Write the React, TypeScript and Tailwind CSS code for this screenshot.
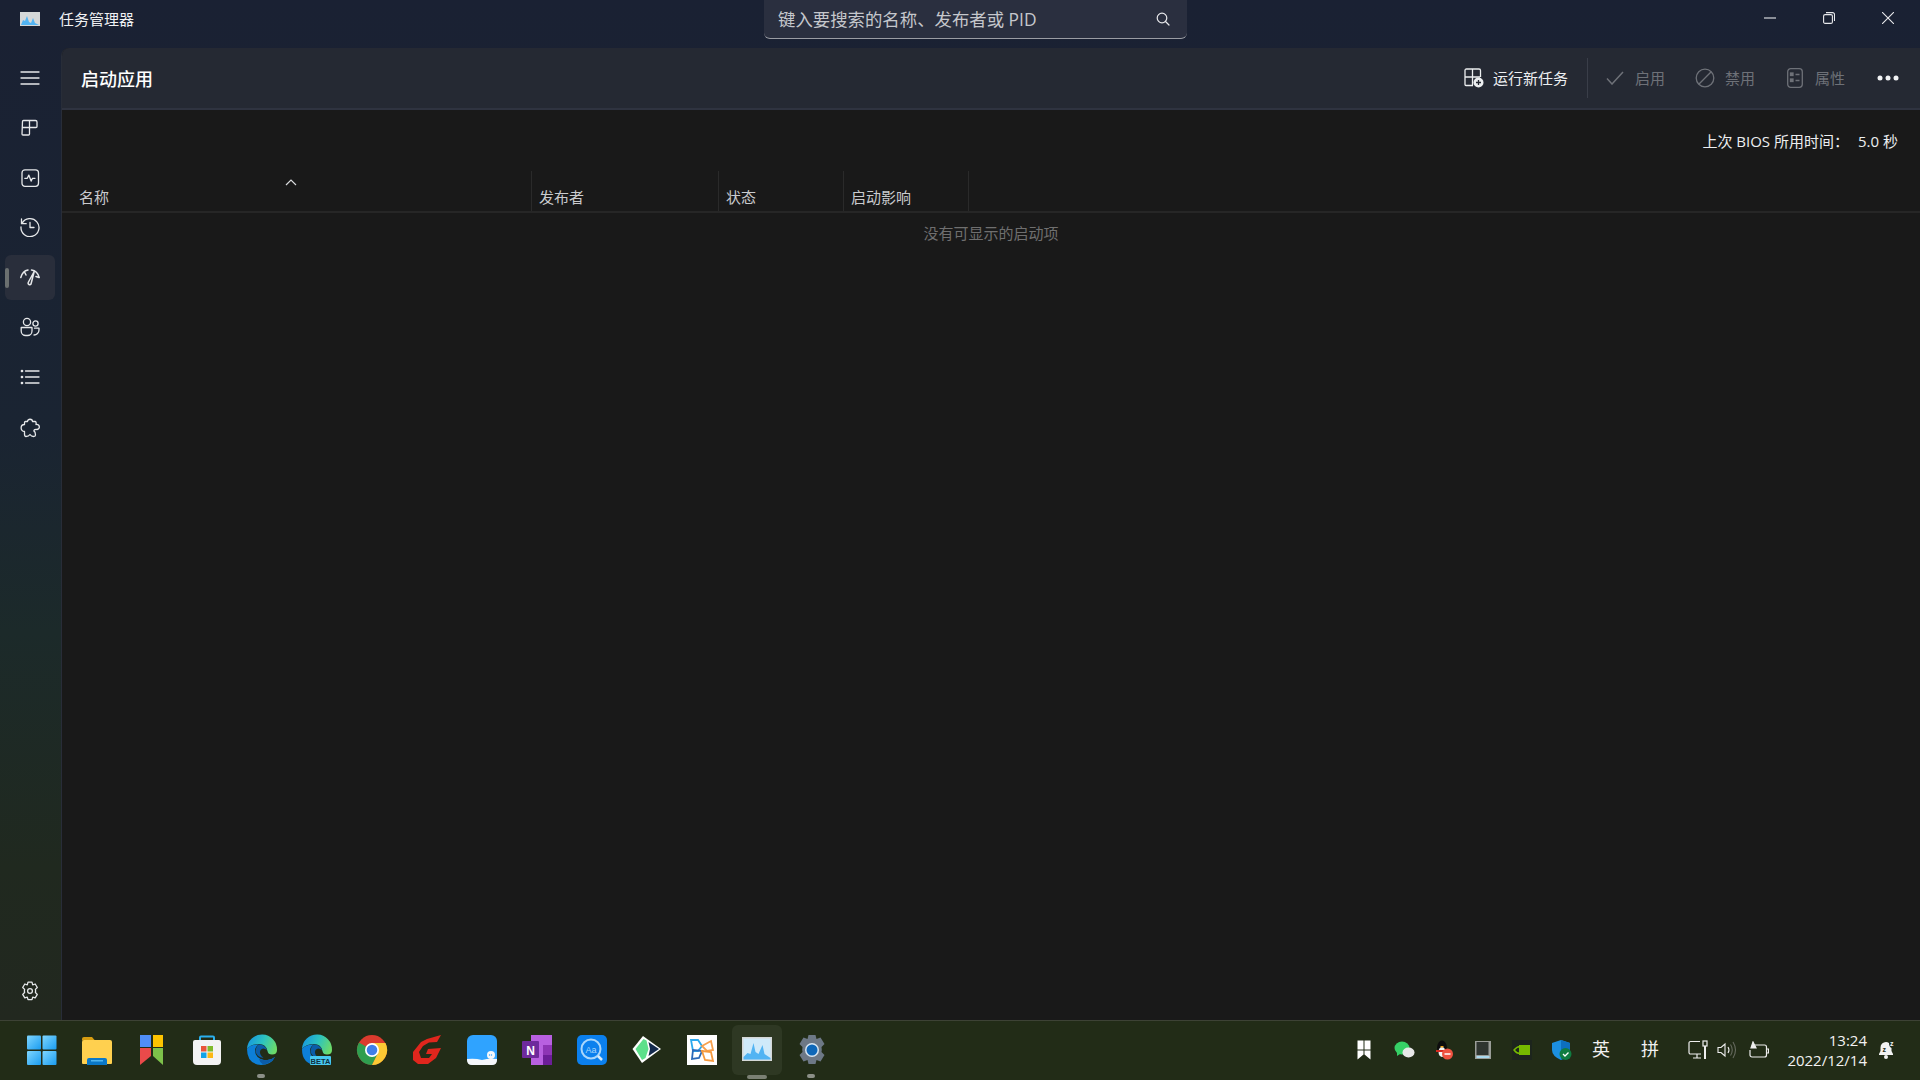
import React from "react";

const S = ({ children, size = 20, className = "" }: { children: React.ReactNode; size?: number; className?: string }) => (
  <svg width={size} height={size} viewBox="0 0 20 20" fill="none" stroke="currentColor" strokeWidth={1.3} strokeLinecap="round" strokeLinejoin="round" className={className}>
    {children}
  </svg>
);

const sideIcons: React.ReactNode[] = [
  <S key="m"><path d="M1 4h18M1 10h18M1 16h18" /></S>,
  <S key="p"><path d="M2.500 3.500a1 1 0 0 1 1-1h12a1.500 1.500 0 0 1 1.500 1.500v4.500a1 1 0 0 1-1 1h-6.500v6.500a1 1 0 0 1-1 1h-5.500a1 1 0 0 1-1-1zM2.500 9.500h7M9.500 2.500v7" /></S>,
  <S key="q"><rect x="2" y="1.800" width="16.500" height="16.500" rx="3" /><path d="M4.800 10.300h2.500l1.500-3.200 2.300 6 1.400-2.800h2.500" /></S>,
  <S key="h" className="-mt-[2px]"><path d="M2 6.500A9 9 0 1 1 1 10M1.500 2v4.700h4.700" /><path d="M10 5.500v5h4" /></S>,
  <S key="s" className="-mt-[2px]"><g strokeWidth={1.500}><path d="M.8 10.500C2 6 5 3.500 8 3M4.500 5 6 8M11.500 3c3.500.5 6.500 3 7.700 7.500M19 10.500l-3-1" /><path d="M14.200 4.500 8.200 15.500a1.600 1.600 0 0 0 2.800 1.500z" /></g></S>,
  <S key="u" className="-mt-[2px]"><circle cx="7" cy="5" r="3.600" /><circle cx="15.500" cy="6.500" r="2.600" /><path d="M1.200 10.500h10.800v3.500a4.500 4.500 0 0 1-4.500 4.500h-1.800a4.500 4.500 0 0 1-4.500-4.500zM14.500 11.200h4.500v1.800a5 5 0 0 1-5 5" /></S>,
  <S key="l" className="-mt-[2px]"><path d="M5.500 4h13.500M5.500 10h13.500M5.500 16h13.500" /><circle cx="2" cy="4" r=".7" fill="currentColor" /><circle cx="2" cy="10" r=".7" fill="currentColor" /><circle cx="2" cy="16" r=".7" fill="currentColor" /></S>,
  <S key="g"><path d="M7.500 3.500C7.500.5 12.500.5 12.500 3.500L15 3.500Q16.500 3.500 16 6.500C20 6 20.500 11 17 11.500C14 11 13 13 15 14L15.500 17Q15.500 18.500 13.500 18.500C12 18.500 11 18 10 16.500C9 18 8 18.500 6 18.500Q4.500 18.500 4.500 16L4.500 13.500C0 13.500 0 6.500 4.500 6.500L4.500 4.500Q4.500 3.500 5.500 3.500z" /></S>,
];

const Settings = () => (
  <S><path d="M8 1.200h4l.7 2.600 2.500-.8 2.100 3.500-1.900 1.900c.2.700.2 2.400 0 3.100l1.900 1.900-2.100 3.500-2.500-.8-.7 2.600H8l-.7-2.600-2.500.8-2.100-3.500 1.900-1.900c-.2-.7-.2-2.400 0-3.100L2.700 6.500 4.800 3l2.500.8z" /><circle cx="10" cy="10" r="2.400" /></S>
);

const I30 = ({ children }: { children: React.ReactNode }) => (
  <svg width={32} height={32} viewBox="0 0 32 32">{children}</svg>
);

const Edge = ({ id }: { id: string }) => (
  <>
    <defs>
      <linearGradient id={id} x1="0" y1="0.300" x2="1" y2="0.600">
        <stop offset="0" stopColor="#1796df" />
        <stop offset="0.500" stopColor="#2cc3c0" />
        <stop offset="1" stopColor="#6ddb68" />
      </linearGradient>
    </defs>
    <path d="M1 15A15 15 0 0 1 31 16Q31 20.500 26 20.500Q22 20.500 21.500 17Q20 10 13 10Q5 10 1 15z" fill={`url(#${id})`} />
    <path d="M1 15Q5 10 13 10.500Q9.500 12 9 16Q9 24 18 26Q24 27 29 23Q25 31 15 31Q1 30 1 15z" fill="#0d7fd8" />
    <path d="M13 10.500Q19 10.500 21 16Q17 13 14.500 16Q12.500 20 17.500 24Q10.500 23 9.500 17Q10 12 13 10.500z" fill="#0b5ca8" />
    <path d="M18 26Q24 27 29 23Q25 30 17 30.500Q14 29 13 25Q15 25.500 18 26z" fill="#0b5ca8" />
  </>
);

const apps: React.ReactNode[] = [
  <I30 key="win"><defs><linearGradient id="w" x1="0" y1="0" x2="1" y2="1"><stop offset="0" stopColor="#7fd6ff" /><stop offset="1" stopColor="#1a9cf0" /></linearGradient></defs><rect x="1" y="1.500" width="14" height="14" rx="1" fill="url(#w)" /><rect x="16.500" y="1.500" width="14" height="14" rx="1" fill="url(#w)" /><rect x="1" y="17" width="14" height="14" rx="1" fill="url(#w)" /><rect x="16.500" y="17" width="14" height="14" rx="1" fill="url(#w)" /></I30>,
  <I30 key="f"><path d="M1 5a2 2 0 0 1 2-2h8l3 3.500H1z" fill="#d69d11" /><path d="M1 8q0-2 2-2h26q2 0 2 2v21q0 1-1 1H2q-1 0-1-1z" fill="#ffd04f" /><path d="M6 31v-5q0-2 2-2h16q2 0 2 2v5z" fill="#0a78c8" /><rect x="10" y="26" width="12" height="1.500" fill="#4fb5ef" /></I30>,
  <I30 key="b"><rect x="4" y="1" width="11" height="12" fill="#4f8ef7" /><rect x="17" y="1" width="10" height="12" fill="#fdc400" /><path d="M4 14h11v8L4 31z" fill="#ea4a4a" /><path d="M17 14h10v17l-10-9z" fill="#7dc14a" /></I30>,
  <I30 key="st"><path d="M9 7V3.500q0-1 1-1h12q1 0 1 1V7" fill="none" stroke="#2ab0ee" strokeWidth="2" /><path d="M2 8q0-2 2-2h24q2 0 2 2v19a4 4 0 0 1-4 4H6a4 4 0 0 1-4-4z" fill="#f3f3f3" /><rect x="10" y="12" width="5.500" height="5.500" fill="#e8543a" /><rect x="16.500" y="12" width="5.500" height="5.500" fill="#7fba2c" /><rect x="10" y="18.500" width="5.500" height="5.500" fill="#12a3e8" /><rect x="16.500" y="18.500" width="5.500" height="5.500" fill="#fcb814" /></I30>,
  <I30 key="e"><Edge id="eg1" /></I30>,
  <I30 key="eb"><Edge id="eg2" /><rect x="9" y="22" width="21" height="9" rx="1" fill="#47c8f0" /><text x="19.500" y="29.500" textAnchor="middle" fontSize="7.500" fontWeight="700" fill="#10303f" fontFamily="Liberation Sans">BETA</text></I30>,
  <I30 key="c"><circle cx="16" cy="16" r="15" fill="#db3b2e" /><path d="M16 16 3 8.500A15 15 0 0 0 16 31l7-13z" fill="#2f9e4f" /><path d="M16 9h13.500A15 15 0 0 1 16 31l6-12z" fill="#fcc934" /><circle cx="16" cy="16" r="7" fill="#fff" /><circle cx="16" cy="16" r="5.300" fill="#3f7fe8" /></I30>,
  <I30 key="g"><path d="M2 26V18L10 8 L16 5 L30 1 L26 8 L18 8.500 L12 12 L8 18 L10 24 L18 24 L21 20 L15 20 L17 15 L30 14 L25 24 L17 30 L7 30z" fill="#e0261d" /></I30>,
  <I30 key="n"><rect x="1" y="1" width="30" height="30" rx="6" fill="#2fa3ff" /><path d="M1 25q8-1 15 1 7-2 15-1v1q0 5-5 5H6q-5 0-5-5z" fill="#f5f7fa" /><circle cx="25" cy="21" r="4" fill="#f5f7fa" /><circle cx="23.500" cy="21" r=".7" fill="#2fa3ff" /><circle cx="25.500" cy="21" r=".7" fill="#2fa3ff" /></I30>,
  <I30 key="o"><path d="M10 1h21v30H10z" fill="#b860e0" /><path d="M22 11h9v10h-9z" fill="#8e35b5" /><path d="M22 21h9v10h-9z" fill="#6c1e98" /><rect x="1" y="7" width="17" height="17" rx="1" fill="#6e2a9c" /><text x="9.500" y="20.500" textAnchor="middle" fontSize="12" fontWeight="700" fill="#fff" fontFamily="Liberation Sans">N</text></I30>,
  <I30 key="a"><rect x="1" y="1" width="30" height="30" rx="5" fill="#0b80ee" /><circle cx="15" cy="15" r="9.500" fill="none" stroke="#a9d6fb" strokeWidth="2" /><text x="15" y="18.500" textAnchor="middle" fontSize="9" fill="#a9d6fb" fontFamily="Liberation Sans">Aa</text><path d="M22 22l4 4" stroke="#d7ecfd" strokeWidth="2.500" /></I30>,
  <I30 key="d"><path d="M1.500 15 12 2l18 13-19 14z" fill="#fff" /><path d="M4.500 15 12.500 5l3 1.500 2 8.500-3 9-3.500 2z" fill="#5de08a" /><path d="M17.500 8 28 15l-10.500 7 1.500-7z" fill="#142a4c" /></I30>,
  <I30 key="x"><rect x="1" y="1" width="30" height="30" fill="#fff" /><path d="M5 6h7l4 6-4 5H7z" fill="none" stroke="#2aa9ee" strokeWidth="1.800" /><path d="M16 12l9-5 2 9-6 1z" fill="none" stroke="#f7a14d" strokeWidth="1.800" /><path d="M16 17 7 16l-1 9 7-1z" fill="none" stroke="#2a68b8" strokeWidth="1.800" /><path d="M16 17l9 1 2 9-8-1z" fill="none" stroke="#f59a3e" strokeWidth="1.800" /></I30>,
  <I30 key="t"><rect x="1" y="3" width="30" height="24" fill="#d5d8d8" /><rect x="2.500" y="4.500" width="27" height="21" fill="#cfeafa" /><path d="M2.500 23l4-4 3 1 3-11 2 9 3 2 4-9 2 9 6 4v1.500h-27z" fill="#52b4f3" /></I30>,
  <I30 key="se"><path d="M12.500 1h7l1 4 4-1.500 4 6.500-3 3q.5 2.500 0 5l3 3-4 6.500-4-1.500-1 4h-7l-1-4-4 1.500-4-6.500 3-3q-.5-2.500 0-5l-3-3 4-6.500 4 1.500z" fill="#6d7886" /><circle cx="16" cy="16" r="7" fill="#d8e6f2" /><circle cx="16" cy="16" r="5.500" fill="#0e67b8" /></I30>,
];

const Bookmark = () => (
  <svg width={14} height={20} viewBox="0 0 14 20" fill="#fff"><rect x="0.500" y="0.500" width="6" height="9" /><rect x="7.500" y="0.500" width="6" height="9" /><path d="M.5 10.500h6v4L.5 19.500zM7.500 10.500h6v9l-6-5z" /></svg>
);

export default function App() {
  return (
    <div className="w-screen h-screen overflow-hidden flex flex-col text-white bg-[#1b2131] font-['Open_Sans','Noto_Sans_CJK_SC',sans-serif] text-[15px]">
      <div className="flex-1 flex flex-col min-h-0 bg-[linear-gradient(180deg,#1a2133_0%,#1a2432_42%,#1c2a2a_62%,#20291f_85%,#22281f_100%)]">
        <div className="h-12 flex items-center shrink-0">
          <svg width={20} height={14} viewBox="0 0 20 14" className="ml-5 mb-[10px]">
            <rect width="20" height="14" fill="#d5d8d8" />
            <path d="M1 13 3 8l2 1 2-5 2 6 2 1 2-5 2 5 4 2z" fill="#52b4f3" />
          </svg>
          <span className="ml-[19px] mb-[10px] text-[#f0f1f3]">任务管理器</span>
          <div className="ml-[630px] w-[423px] h-[39px] mb-[9px] bg-[#2a2f3f] rounded-b-md border-b border-b-[#9a9ca3] flex items-center pl-[14px] pr-[17px] justify-between">
            <span className="text-[17.400px] text-[#c5c7cc]">键入要搜索的名称、发布者或 PID</span>
            <svg width={14} height={14} viewBox="0 0 14 14" fill="none" stroke="#e8e9ec" strokeWidth={1.200} strokeLinecap="round"><circle cx="6" cy="6" r="4.800" /><path d="M9.500 9.500 13 13" /></svg>
          </div>
          <div className="ml-auto flex mr-[3px] mb-[13px] items-center text-[#e8e9ec]">
            <div className="w-[58px] flex justify-center">
              <svg width={12} height={12} viewBox="0 0 12 12" stroke="currentColor" strokeWidth={1.100}><path d="M0 6h12" /></svg>
            </div>
            <div className="w-[59px] flex justify-center">
              <svg width={12} height={12} viewBox="0 0 12 12" fill="none" stroke="currentColor" strokeWidth={1.100}><rect x=".6" y="2.600" width="8.800" height="8.800" rx="1.500" /><path d="M3 .6h6.500a2 2 0 0 1 2 2V9" /></svg>
            </div>
            <div className="w-[59px] flex justify-center">
              <svg width={12} height={12} viewBox="0 0 12 12" stroke="currentColor" strokeWidth={1.100}><path d="M0 0l12 12M12 0 0 12" /></svg>
            </div>
          </div>
        </div>

        <div className="flex-1 flex min-h-0">
          <aside className="w-[61px] shrink-0 pt-[7px] pb-[7px] pl-[5px] flex flex-col gap-[5px] text-[#e6e8ea]">
            {sideIcons.map((ic, i) => (
              <div key={i} className={`relative w-[50px] h-[45px] flex items-center justify-center rounded-md ${i === 4 ? "bg-[#292e3b]" : ""}`}>
                {i === 4 && <span className="absolute left-0 top-[13px] w-[4px] h-[20px] rounded bg-[#6b7070]" />}
                {ic}
              </div>
            ))}
            <div className="mt-auto w-[50px] h-[45px] flex items-center justify-center"><Settings /></div>
          </aside>

          <main className="flex-1 min-w-0 flex flex-col bg-[#191919] rounded-tl-lg overflow-hidden border-l border-l-[#282d38]">
            <div className="h-[62px] shrink-0 bg-[#252933] border-b-2 border-b-[#2f3340] flex items-center pl-[19px] pr-[21px]">
              <h1 className="text-[18px] font-medium text-white mt-[3px]">启动应用</h1>
              <div className="ml-auto flex items-center text-[#eceef0]">
                <svg width={20} height={20} viewBox="0 0 20 20" fill="none" stroke="currentColor" strokeWidth={1.300}>
                  <path d="M1 2.500q0-1.500 1.500-1.500h12.500q1.500 0 1.500 1.500V9M1 9h15M8.500 1v16M1 2v14.500q0 1 1 1h7" />
                  <circle cx="14.500" cy="14.500" r="5" fill="#eceef0" stroke="none" />
                  <path d="M14.500 12v5M12 14.500h5" stroke="#252933" />
                </svg>
                <span className="ml-[9px]">运行新任务</span>
                <span className="w-px h-10 bg-[#3a3e49] ml-[19px]" />
                <div className="flex items-center text-[#6e7178]">
                  <svg width={18} height={14} viewBox="0 0 18 14" fill="none" stroke="currentColor" strokeWidth={1.500} className="ml-[18px]"><path d="M1 7.500 6 13 17 1" /></svg>
                  <span className="ml-[11px]">启用</span>
                  <svg width={20} height={20} viewBox="0 0 20 20" fill="none" stroke="currentColor" strokeWidth={1.300} className="ml-[30px]"><circle cx="10" cy="10" r="8.800" /><path d="M3.800 16.200 16.200 3.800" /></svg>
                  <span className="ml-[10px]">禁用</span>
                  <svg width={16} height={20} viewBox="0 0 16 20" fill="none" stroke="currentColor" strokeWidth={1.300} className="ml-[32px]"><rect x=".7" y=".7" width="14.600" height="18.600" rx="3" /><path d="M8.500 6.500h4M8.500 12.500h4" /><rect x="3.500" y="5" width="2.500" height="2.500" fill="currentColor" /><rect x="3.500" y="11" width="2.500" height="2.500" fill="currentColor" /></svg>
                  <span className="ml-[12px]">属性</span>
                </div>
                <svg width={22} height={6} viewBox="0 0 22 6" fill="#f2f3f5" className="ml-[32px]"><circle cx="3" cy="3" r="2.500" /><circle cx="11" cy="3" r="2.500" /><circle cx="19" cy="3" r="2.500" /></svg>
              </div>
            </div>

            <div className="h-[61px] shrink-0 flex items-start justify-end pr-[22px] pt-[20px] text-[#eceef0] leading-[22px]">
              <span>上次 BIOS 所用时间：</span>
              <span className="ml-[9px]">5.0 秒</span>
            </div>

            <div className="h-[42px] shrink-0 flex border-b-2 border-b-[#262626] text-[#c9cbce]">
              <div className="w-[470px] border-r border-r-[#2a2a2a] pl-[17px] pt-[15px] leading-[22px] relative">
                名称
                <svg width={12} height={7} viewBox="0 0 12 7" fill="none" stroke="#d8dadc" strokeWidth={1.200} className="absolute left-[223px] top-[8px]"><path d="M1 6 6 1l5 5" /></svg>
              </div>
              <div className="w-[187px] border-r border-r-[#2a2a2a] pl-[7px] pt-[15px] leading-[22px]">发布者</div>
              <div className="w-[125px] border-r border-r-[#2a2a2a] pl-[7px] pt-[15px] leading-[22px]">状态</div>
              <div className="w-[125px] border-r border-r-[#2a2a2a] pl-[7px] pt-[15px] leading-[22px]">启动影响</div>
            </div>

            <div className="text-center text-[#6f6f6f] pt-[9px] leading-[22px]">没有可显示的启动项</div>
          </main>
        </div>
      </div>

      <footer className="h-[60px] shrink-0 bg-[#222c17] border-t border-t-[#3d4235] flex items-center">
        <div className="flex h-full pl-[14px]">
          {apps.map((a, i) => (
            <div key={i} className="relative w-[55px] h-full flex items-center justify-center pb-[2px]">
              {i === 13 && <span className="absolute left-[3px] top-[4px] w-[50px] h-[50px] rounded-md bg-[#2e3823]" />}
              <span className="relative flex">{a}</span>
              {i === 4 && <span className="absolute left-[23px] bottom-[2px] w-[8px] h-[4px] rounded bg-[#8c9088]" />}
              {i === 13 && <span className="absolute left-[18px] bottom-[1px] w-[20px] h-[4px] rounded bg-[#7b8074]" />}
              {i === 14 && <span className="absolute left-[23px] bottom-[2px] w-[8px] h-[4px] rounded bg-[#8c9088]" />}
            </div>
          ))}
        </div>

        <div className="ml-auto flex items-center h-full pr-[24px] pb-[2px]">
          <div className="w-[40px] flex justify-center"><Bookmark /></div>
          <div className="w-[40px] flex justify-center">
            <svg width={21} height={18} viewBox="0 0 21 18"><ellipse cx="8" cy="7" rx="7.500" ry="6.500" fill="#36d066" /><path d="M3 11v4l3-2z" fill="#36d066" /><ellipse cx="14.500" cy="11.500" rx="6" ry="5" fill="#e8e8e8" /></svg>
          </div>
          <div className="w-[40px] flex justify-center">
            <svg width={18} height={20} viewBox="0 0 18 20"><ellipse cx="7" cy="8" rx="5" ry="7.500" fill="#0d0d0d" /><ellipse cx="7" cy="12" rx="3.500" ry="5" fill="#f5f5f5" /><path d="M1 10h12v2H1z" fill="#d6281f" /><path d="M5 6h4l-2 2z" fill="#f3a51a" /><circle cx="12.500" cy="14" r="5.500" fill="#ef5240" /><path d="M9.500 14h6" stroke="#fff" strokeWidth="1.500" /></svg>
          </div>
          <div className="w-[38px] flex justify-center">
            <svg width={16} height={18} viewBox="0 0 16 18"><rect width="16" height="18" fill="#9a9d98" /><rect x="1.500" y="1" width="12" height="13" fill="#2f3530" /><rect x="1.500" y="15" width="13" height="2" fill="#a9d9ee" /></svg>
          </div>
          <div className="w-[40px] flex justify-center">
            <svg width={20} height={20} viewBox="0 0 20 20"><rect width="20" height="20" fill="#1d251d" /><rect x="7" y="5" width="11" height="10" fill="#76b900" /><path d="M2 10q4-5 9-3 3 2 3 3-2 3-5 3.500Q5 14 2 10z" fill="none" stroke="#76b900" strokeWidth="1.400" /></svg>
          </div>
          <div className="w-[40px] flex justify-center">
            <svg width={20} height={20} viewBox="0 0 20 20"><path d="M9 0 0 3v7q0 6 9 10 9-4 9-10V3z" fill="#1c8fe0" /><path d="M9 0v20q9-4 9-10V3z" fill="#0d6fc0" /><circle cx="13.500" cy="14" r="6" fill="#107c41" /><path d="M11 14l2 2 3.500-3.500" stroke="#fff" strokeWidth="1.300" fill="none" /></svg>
          </div>
          <span className="w-[38px] text-center text-[18px] text-[#f0f0f0]">英</span>
          <span className="w-[60px] text-center text-[18px] text-[#f0f0f0]">拼</span>
          <svg width={20} height={20} viewBox="0 0 20 20" fill="none" stroke="#eee" strokeWidth={1.200} className="ml-[8px]"><path d="M12 1.500H2.500a1.500 1.500 0 0 0-1.500 1.500v9.500A1.500 1.500 0 0 0 2.500 14H13M5 18h8M9 14v4" /><rect x="15" y="1" width="4" height="5" /><path d="M17 6v13" strokeWidth="2" /></svg>
          <svg width={20} height={18} viewBox="0 0 20 18" fill="none" stroke="#eee" strokeWidth={1.100} className="ml-[9px]"><path d="M1 6.500h3L8 3v12L4 11.500H1z" /><path d="M11 6q2 3 0 6" /><path d="M13.500 3.500q3.500 5.500 0 11M16 1q5 8 0 16" stroke="#666a5f" /></svg>
          <svg width={20} height={18} viewBox="0 0 20 18" fill="none" stroke="#eee" strokeWidth={1.200} className="ml-[12px]"><path d="M6 4h9.500a2 2 0 0 1 2 2v8a2 2 0 0 1-2 2H3a2 2 0 0 1-2-2V9" /><path d="M18 8h1.500v4H18" /><path d="M4 1 2 7h5z" fill="#eee" /></svg>
          <div className="w-[98px] text-right text-[#f2f2f2] leading-[20px] text-[15px]">
            <div>13:24</div>
            <div>2022/12/14</div>
          </div>
          <svg width={18} height={20} viewBox="0 0 18 20" fill="#f2f2f2" className="ml-[11px]"><path d="M8 2a5.500 5.500 0 0 0-5.500 5.500V11L1 14v1h14v-1l-1.500-3V8Q11 7 11 3 9.500 2 8 2z" /><circle cx="8" cy="17" r="2" /><text x="4.500" y="11.500" fontSize="7" fontWeight="700" fill="#222c17" fontFamily="Liberation Sans">z</text><text x="12" y="6" fontSize="7" fontWeight="700" fontFamily="Liberation Sans">z</text></svg>
        </div>
      </footer>
    </div>
  );
}
